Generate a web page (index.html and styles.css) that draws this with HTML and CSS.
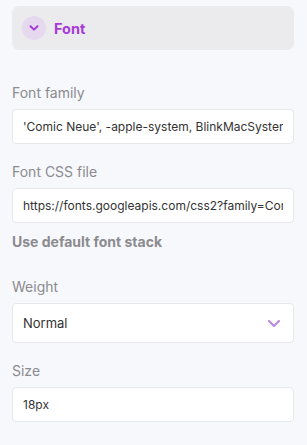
FILE: index.html
```html
<!DOCTYPE html>
<html>
<head>
<meta charset="utf-8">
<link rel="stylesheet" href="styles.css">
</head>
<body>
<div class="panel">
  <div class="section-head">
    <span class="toggle">
      <svg width="12" height="8" viewBox="0 0 12 8"><path d="M2.5 2.2 L6 5.6 L9.5 2.2" fill="none" stroke="#a33bd6" stroke-width="2" stroke-linecap="round" stroke-linejoin="round"/></svg>
    </span>
    <span class="head-title">Font</span>
  </div>
  <div class="fields">
    <label class="field first">
      <span class="label">Font family</span>
      <input class="input" type="text" readonly value="'Comic Neue', -apple-system, BlinkMacSystemFont, sans-serif">
    </label>
    <label class="field">
      <span class="label">Font CSS file</span>
      <input class="input" type="text" readonly value="https://fonts.googleapis.com/css2?family=Comic+Neue">
    </label>
    <div class="link">Use default font stack</div>
    <div class="field wide">
      <span class="label">Weight</span>
      <div class="select">
        <span>Normal</span>
        <svg width="14" height="9" viewBox="0 0 14 9"><path d="M2 2 L7 7 L12 2" fill="none" stroke="#b98be3" stroke-width="2.2" stroke-linecap="round" stroke-linejoin="round"/></svg>
      </div>
    </div>
    <label class="field">
      <span class="label">Size</span>
      <input class="input" type="text" readonly value="18px">
    </label>
  </div>
</div>
</body>
</html>
```
FILE: styles.css
```css
html, body {
  margin: 0;
  padding: 0;
  background: #f7f8fb;
}
body {
  font-family: Inter, "Noto Sans", sans-serif;
}
.panel {
  padding: 6px 13px 0 12px;
}
.section-head {
  height: 44px;
  background: #ebebee;
  border-radius: 7px;
  display: flex;
  align-items: center;
  padding-left: 10px;
  gap: 8px;
}
.toggle {
  width: 24px;
  height: 24px;
  border-radius: 50%;
  background: #e6d9ef;
  display: flex;
  align-items: center;
  justify-content: center;
}
.head-title {
  font-size: 14.5px;
  font-weight: 700;
  color: #a83ad8;
}
.fields {
  display: flex;
  flex-direction: column;
  padding-top: 34px;
}
.field {
  display: flex;
  flex-direction: column;
  gap: 7px;
  margin-top: 19px;
}
.field.first {
  margin-top: 0;
}
.field.wide {
  margin-top: 27px;
}
.label {
  font-size: 14px;
  line-height: 18px;
  color: #8b8b90;
}
.input {
  display: block;
  width: 100%;
  height: 35px;
  box-sizing: border-box;
  margin: 0;
  background: #fff;
  border: 1px solid #e7e8ec;
  border-radius: 4px;
  padding: 0 10px;
  font-family: Inter, "Noto Sans", sans-serif;
  font-size: 12px;
  color: #333;
  outline: none;
}
.select {
  height: 40px;
  box-sizing: border-box;
  background: #fff;
  border: 1px solid #e7e8ec;
  border-radius: 4px;
  display: flex;
  align-items: center;
  justify-content: space-between;
  font-size: 13px;
  color: #333;
  padding: 0 12px 0 10px;
}
.link {
  margin-top: 10px;
  font-size: 14px;
  line-height: 18px;
  font-weight: 700;
  color: #8b8b90;
}
```
